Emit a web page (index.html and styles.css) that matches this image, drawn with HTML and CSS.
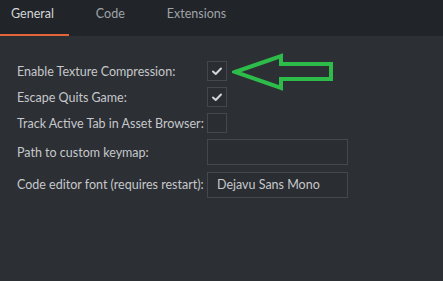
FILE: index.html
```html
<!DOCTYPE html>
<html lang="en">
<head>
    <meta charset="UTF-8">
    <title>Preferences</title>
    <link rel="stylesheet" href="styles.css">
</head>
<body>
    <div class="tabs">
        <div class="tab tab-active">General</div>
        <div class="tab">Code</div>
        <div class="tab">Extensions</div>
    </div>

    <div class="prefs">
        <label class="label">Enable Texture Compression:</label>
        <div class="check checked">
            <svg viewBox="0 0 20 20" width="20" height="20"><path d="M6 10.5 L8.7 13 L14 7.5" /></svg>
        </div>

        <label class="label">Escape Quits Game:</label>
        <div class="check checked">
            <svg viewBox="0 0 20 20" width="20" height="20"><path d="M6 10.5 L8.7 13 L14 7.5" /></svg>
        </div>

        <label class="label">Track Active Tab in Asset Browser:</label>
        <div class="check"></div>

        <label class="label">Path to custom keymap:</label>
        <div class="field"></div>

        <label class="label">Code editor font (requires restart):</label>
        <div class="field">Dejavu Sans Mono</div>
    </div>

    <!-- annotation arrow -->
    <svg class="arrow" width="104" height="40" viewBox="0 0 104 40">
        <path d="M3 19 L49 3 L49 11 L99 11 L99 26 L49 26 L49 35 Z" />
    </svg>
</body>
</html>
```

FILE: styles.css
```css
/* editor preferences - dark theme */
body {
    margin: 0;
    width: 443px;
    height: 281px;
    overflow: hidden;
    background-color: #2c2f34;
    font-family: Lato, "Open Sans", sans-serif;
    font-size: 12.5px;
    color: #c6c8cb;
    position: relative;
}

/* tab bar */
.tabs {
    display: flex;
    height: 36px;
    background-color: #212429;
}

.tab {
    padding: 0 21px;
    line-height: 27px;
    color: #9fa3a7;
    border-bottom: 2px solid transparent;
    height: 36px;
    box-sizing: border-box;
}

.tab:first-child {
    padding-left: 11px;
    padding-right: 15px;
    margin-right: 6px;
}

.tab-active {
    color: #d4d6d8;
    border-bottom-color: #e4643a;
}

/* form grid */
.prefs {
    display: grid;
    grid-template-columns: 190px 141px;
    row-gap: 6px;
    padding: 25px 0 0 17px;
    align-items: center;
}

.label {
    white-space: nowrap;
}

.check {
    width: 20px;
    height: 20px;
    box-sizing: border-box;
    border: 1px solid #44474d;
    background-color: #2a2d32;
}

.check svg {
    display: block;
    margin: -1px;
}

.check path {
    fill: none;
    stroke: #d2d4d7;
    stroke-width: 2;
    stroke-linecap: round;
    stroke-linejoin: round;
}

.field {
    height: 26px;
    box-sizing: border-box;
    border: 1px solid #44474d;
    background-color: #2a2d32;
    padding-left: 9px;
    line-height: 24px;
    color: #c6c8cb;
}

.field:last-child {
    margin-top: 1px;
}

/* green annotation arrow over the content */
.arrow {
    position: absolute;
    left: 232px;
    top: 53px;
}

.arrow path {
    fill: none;
    stroke: #2dbb4a;
    stroke-width: 4;
    stroke-linejoin: miter;
}
```
